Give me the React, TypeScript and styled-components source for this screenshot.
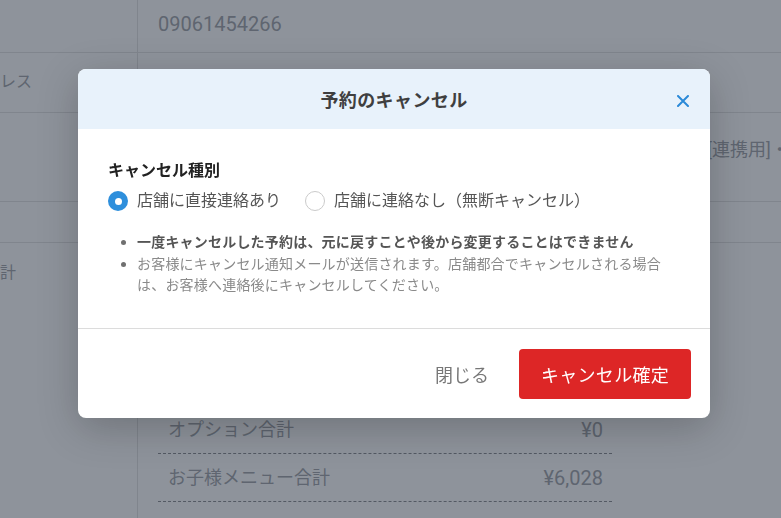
import React from 'react';
import styled, { createGlobalStyle } from 'styled-components';

const GlobalStyle = createGlobalStyle`
  html, body {
    margin: 0;
    padding: 0;
    background: #ffffff;
    overflow: hidden;
  }
  body {
    font-family: Roboto, "Noto Sans CJK JP", sans-serif;
    width: 781px;
    height: 518px;
  }
`;

const Page = styled.div`
  width: 781px;
  height: 518px;
  overflow: hidden;
`;

const Table = styled.div`
  margin-left: -80px;
  width: 900px;
`;

const Row = styled.div<{ $h?: number; $top: number }>`
  display: grid;
  grid-template-columns: 218px 1fr;
  box-sizing: border-box;
  height: ${({ $h }) => ($h ? `${$h}px` : 'auto')};
  border-bottom: ${({ $h }) => ($h ? '1px solid #e2e2e2' : 'none')};

  & > div {
    padding-top: ${({ $top }) => $top}px;
  }
`;

const LabelCell = styled.div`
  border-right: 1px solid #e2e2e2;
  font-size: 16px;
  line-height: 28px;
  color: #a0a3a8;
  white-space: nowrap;
`;

const ValueCell = styled.div<{ $tall?: boolean }>`
  padding-left: 20px;
  font-size: 18px;
  line-height: 28px;
  color: #a0a3a8;
  white-space: nowrap;
  overflow: hidden;
  min-height: ${({ $tall }) => ($tall ? '300px' : '0')};
`;

const Num = styled.span`
  font-size: 20px;
`;

const Breakdown = styled.div`
  width: 454px;
  margin-top: 3px;
`;

const BreakdownItem = styled.div`
  height: 48px;
  box-sizing: border-box;
  border-bottom: 1px dashed #8a8c90;
  display: flex;
  align-items: center;
  justify-content: space-between;
  padding: 0 9px 0 10px;
`;

const Overlay = styled.div`
  position: fixed;
  inset: 0;
  background: rgba(30, 40, 55, 0.5);
  display: flex;
  justify-content: center;
  align-items: flex-start;
  padding: 69px 0 0 7px;
`;

const Modal = styled.div`
  width: 632px;
  background: #ffffff;
  border-radius: 8px;
  overflow: hidden;
  box-shadow: 0 10px 40px rgba(0, 0, 0, 0.22);
`;

const Header = styled.div`
  height: 60px;
  background: #e8f2fb;
  display: grid;
  grid-template-columns: 1fr auto 1fr;
  align-items: center;
  padding: 0 20px;
`;

const Title = styled.h2`
  grid-column: 2;
  margin: 0;
  font-size: 18px;
  font-weight: 700;
  color: #3f3f3f;
  letter-spacing: 0.4px;
`;

const CloseButton = styled.button`
  justify-self: end;
  width: 14px;
  height: 14px;
  padding: 0;
  margin-top: 4px;
  border: none;
  background: none;
  display: flex;
  align-items: center;
  justify-content: center;
`;

const Body = styled.div`
  padding: 30px 30px 31px 30px;
`;

const SectionLabel = styled.div`
  font-size: 16px;
  font-weight: 700;
  line-height: 24px;
  color: #222222;
`;

const RadioGroup = styled.div`
  display: flex;
  gap: 24px;
  margin-top: 6px;
`;

const RadioOption = styled.label`
  display: flex;
  align-items: center;
  gap: 9px;
  font-size: 16px;
  line-height: 24px;
  color: #555555;
`;

const RadioMark = styled.span<{ $checked?: boolean }>`
  width: 20px;
  height: 20px;
  box-sizing: border-box;
  border-radius: 50%;
  display: flex;
  align-items: center;
  justify-content: center;
  background: ${({ $checked }) => ($checked ? '#2e8fdc' : '#ffffff')};
  border: ${({ $checked }) => ($checked ? 'none' : '1px solid #cacaca')};

  &::after {
    content: '';
    display: ${({ $checked }) => ($checked ? 'block' : 'none')};
    width: 7px;
    height: 7px;
    border-radius: 50%;
    background: #ffffff;
  }
`;

const Notes = styled.ul`
  margin: 19px 0 0 0;
  padding-left: 29px;
  max-width: 532px;
`;

const Note = styled.li<{ $strong?: boolean }>`
  font-size: 14px;
  line-height: 21.5px;
  letter-spacing: 0.2px;
  color: ${({ $strong }) => ($strong ? '#555555' : '#8a8a8a')};
  font-weight: ${({ $strong }) => ($strong ? 700 : 400)};

  &::marker {
    color: #707070;
    font-size: 15px;
  }
`;

const Footer = styled.div`
  border-top: 1px solid #dcdcdc;
  display: flex;
  justify-content: flex-end;
  align-items: center;
  gap: 30px;
  padding: 20px 19px 19px;
`;

const TextButton = styled.button`
  border: none;
  background: none;
  padding: 0;
  font-family: inherit;
  font-size: 18px;
  color: #777777;
`;

const DangerButton = styled.button`
  width: 172px;
  height: 50px;
  border: none;
  border-radius: 4px;
  background: #dd2626;
  color: #ffffff;
  font-family: inherit;
  font-size: 18px;
  letter-spacing: 0.3px;
`;

const CloseIcon = () => (
  <svg width="12" height="12" viewBox="0 0 12 12">
    <path d="M1 1 L11 11 M11 1 L1 11" stroke="#2b8ad8" strokeWidth="2" strokeLinecap="round" />
  </svg>
);

const breakdown = [
  { label: 'コース合計', value: '¥0' },
  { label: '飲み放題合計', value: '¥0' },
  { label: '単品合計', value: '¥0' },
  { label: 'オプション合計', value: '¥0' },
  { label: 'お子様メニュー合計', value: '¥6,028' },
];

const App = () => {
  return (
    <Page>
      <GlobalStyle />
      <Table>
        <Row $h={53} $top={10}>
          <LabelCell>電話番号</LabelCell>
          <ValueCell>
            <Num>09061454266</Num>
          </ValueCell>
        </Row>
        <Row $h={60} $top={15}>
          <LabelCell>メールアドレス</LabelCell>
          <ValueCell>sample@example.co.jp</ValueCell>
        </Row>
        <Row $h={89} $top={23}>
          <LabelCell>備考</LabelCell>
          <ValueCell>
            予約内容の確認とキャンセル通知を送信する外部用メールアドレス{'\u2002'}[連携用]・その他
          </ValueCell>
        </Row>
        <Row $h={41} $top={6}>
          <LabelCell>人数</LabelCell>
          <ValueCell></ValueCell>
        </Row>
        <Row $top={16}>
          <LabelCell>予約金額合計</LabelCell>
          <ValueCell $tall>
            <Breakdown>
              {breakdown.map((item) => (
                <BreakdownItem key={item.label}>
                  <span>{item.label}</span>
                  <Num>{item.value}</Num>
                </BreakdownItem>
              ))}
            </Breakdown>
          </ValueCell>
        </Row>
      </Table>

      <Overlay>
        <Modal>
          <Header>
            <Title>予約のキャンセル</Title>
            <CloseButton aria-label="閉じる">
              <CloseIcon />
            </CloseButton>
          </Header>
          <Body>
            <SectionLabel>キャンセル種別</SectionLabel>
            <RadioGroup>
              <RadioOption>
                <RadioMark $checked />
                店舗に直接連絡あり
              </RadioOption>
              <RadioOption>
                <RadioMark />
                店舗に連絡なし（無断キャンセル）
              </RadioOption>
            </RadioGroup>
            <Notes>
              <Note $strong>一度キャンセルした予約は、元に戻すことや後から変更することはできません</Note>
              <Note>
                お客様にキャンセル通知メールが送信されます。店舗都合でキャンセルされる場合は、お客様へ連絡後にキャンセルしてください。
              </Note>
            </Notes>
          </Body>
          <Footer>
            <TextButton>閉じる</TextButton>
            <DangerButton>キャンセル確定</DangerButton>
          </Footer>
        </Modal>
      </Overlay>
    </Page>
  );
};

export default App;
